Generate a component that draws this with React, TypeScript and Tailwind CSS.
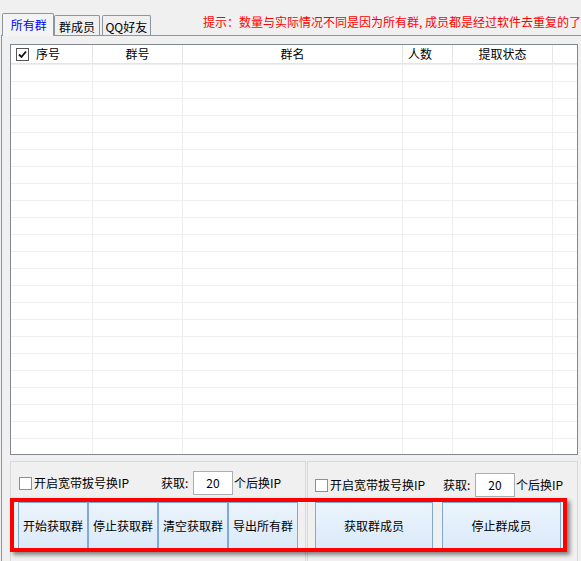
import React from 'react'

const FONT = { fontFamily: '"Noto Sans CJK SC", "Noto Sans", sans-serif' }

const columns = [
  { label: '群号', width: 'w-[90px]' },
  { label: '群名', width: 'w-[220px]' },
  { label: '人数', width: 'w-[50px]' },
  { label: '提取状态', width: 'w-[100px]' },
]

function CheckBox({ checked = false }: { checked?: boolean }) {
  return (
    <span
      className={
        'flex h-[13px] w-[13px] shrink-0 items-center justify-center bg-white border ' +
        (checked ? 'border-[#555]' : 'border-[#8f8f8f]')
      }
    >
      {checked && (
        <svg width="9" height="9" viewBox="0 0 9 9">
          <path d="M1 4.5 L3.5 7 L8 1.5" fill="none" stroke="#111" strokeWidth="1.8" />
        </svg>
      )}
    </span>
  )
}

function DialRow({ labelWidth }: { labelWidth: string }) {
  return (
    <div className="flex h-[24px] items-center text-[12px] leading-[14px] text-black">
      <div className={'flex items-center gap-[2px] ' + labelWidth}>
        <CheckBox />
        <span>开启宽带拔号换IP</span>
      </div>
      <span className="w-[32px]">获取:</span>
      <div className="flex h-[24px] w-[40px] items-center justify-center border border-[#abadb3] bg-white">
        20
      </div>
      <span className="ml-[1px]">个后换IP</span>
    </div>
  )
}

function WinButton({ label, width }: { label: string; width: string }) {
  return (
    <button
      className={
        'h-[47px] shrink-0 border border-[#7fa9d8] bg-gradient-to-b from-[#ebf4fd] to-[#dbeaf9] text-[12px] leading-[14px] text-black ' +
        width
      }
    >
      {label}
    </button>
  )
}

export default function App() {
  const rows = Array.from({ length: 23 })

  return (
    <div className="relative h-[561px] w-[581px] overflow-hidden bg-[#f0f0f0]" style={FONT}>
      {/* Tab strip */}
      <div className="flex h-[35px] items-end pl-[2px] text-[12px] leading-[14px]">
        <div className="relative z-10 -mb-px flex h-[23px] w-[53px] items-center justify-center rounded-t-[2px] border-x border-t border-[#8c96a0] bg-[#f4f4f4] pb-[1px] pl-[1px] text-[#0000ff]">
          所有群
        </div>
        <div className="flex h-[20px] w-[46px] items-center justify-center rounded-t-[2px] border-x border-t border-[#8c96a0] pt-[2px] text-black">
          群成员
        </div>
        <div className="ml-[2px] flex h-[20px] w-[50px] items-center justify-center rounded-t-[2px] border-x border-t border-[#8c96a0] pt-[2px] text-black">
          QQ好友
        </div>
        <div className="ml-[52px] self-start mt-[15px] whitespace-nowrap text-[12px] leading-[14px] text-[#ff0000]">
          提示：数量与实际情况不同是因为所有群, 成员都是经过软件去重复的了
        </div>
      </div>

      {/* Tab page */}
      <div className="ml-[1px] w-[620px] border-l border-t border-[#8c96a0] pl-[8px] pt-[8px]">
        {/* List view */}
        <div className="flex h-[411px] w-[568px] flex-col overflow-hidden border border-[#828790] bg-white">
          <div className="flex h-[19px] shrink-0 border-b border-[#dde6f3] text-[12px] leading-[14px] text-black">
            <div className="flex w-[82px] items-center gap-[7px] border-r border-[#e5e5e5] pl-[5px]">
              <CheckBox checked />
              <span>序号</span>
            </div>
            {columns.map((c) => (
              <div
                key={c.label}
                className={
                  'flex items-center border-r border-[#e5e5e5] ' +
                  c.width +
                  (c.label === '人数' ? ' justify-start pl-[5px]' : ' justify-center')
                }
              >
                {c.label}
              </div>
            ))}
            <div className="flex-1" />
          </div>
          {rows.map((_, i) => (
            <div key={i} className="flex h-[17px] shrink-0 border-t border-[#efefef]">
              <div className="w-[82px] border-r border-[#efefef]" />
              {columns.map((c) => (
                <div key={c.label} className={'border-r border-[#efefef] ' + c.width} />
              ))}
              <div className="flex-1" />
            </div>
          ))}
        </div>

        {/* Group boxes */}
        <div className="mt-[6px] flex gap-[1px]">
          <div className="h-[110px] w-[296px] border border-[#d9d9d9] pl-[8px] pt-[9px]">
            <DialRow labelWidth="w-[142px]" />
            <div className="ml-[-1px] mt-[7px] flex">
              <WinButton label="开始获取群" width="w-[70px]" />
              <WinButton label="停止获取群" width="w-[70px]" />
              <WinButton label="清空获取群" width="w-[70px]" />
              <WinButton label="导出所有群" width="w-[70px]" />
            </div>
          </div>
          <div className="h-[110px] w-[271px] border border-[#d9d9d9] pl-[7px] pt-[11px]">
            <DialRow labelWidth="w-[128px]" />
            <div className="mt-[5px] flex gap-[9px]">
              <WinButton label="获取群成员" width="w-[118px]" />
              <WinButton label="停止群成员" width="w-[119px]" />
            </div>
          </div>
        </div>
      </div>

      {/* Red annotation frame */}
      <div className="pointer-events-none absolute left-[10px] top-[498px] h-[54px] w-[557px] border-4 border-[#ff0000] shadow-[3px_3px_4px_rgba(0,0,0,0.45)]" />
    </div>
  )
}
